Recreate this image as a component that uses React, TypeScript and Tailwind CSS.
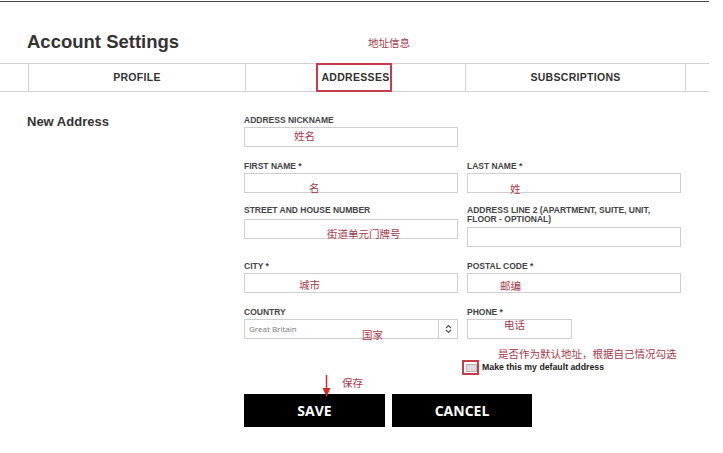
import React from 'react';

const note = "absolute text-[10.5px] leading-[12px] text-[#a53a48] whitespace-nowrap [font-family:'Noto_Sans_CJK_SC',sans-serif]";
const label = 'block text-[8.5px] leading-[9px] font-bold uppercase text-[#444]';
const input = 'block w-full h-[20px] border border-[#cfcfcf] bg-white';

function Field({ text, className = '', gap = 'mt-[2px]' }: { text: string; className?: string; gap?: string }) {
    return (
        <div className={className}>
            <span className={label}>{text}</span>
            <div className={`${input} ${gap}`} />
        </div>
    );
}

export default function App() {
    const tabs = [
        { name: 'PROFILE', w: 'w-[217px]' },
        { name: 'ADDRESSES', w: 'w-[220px]' },
        { name: 'SUBSCRIPTIONS', w: 'w-[220px]' },
    ];

    return (
        <div className="relative w-[723px] h-[453px] overflow-hidden bg-white text-[#333] [font-family:'Liberation_Sans',Arial,sans-serif]">
            {/* top rule */}
            <div className="mt-[1px] h-px w-[709px] bg-[#444]" />

            <h1 className="mt-[29px] pl-[27px] text-[18.5px] leading-[22px] font-bold text-[#333]">Account Settings</h1>

            {/* Tabs */}
            <div className="mt-[10px] flex h-[29px] w-[709px] border-y border-[#d2d2d2]">
                <div className="w-[28px]" />
                {tabs.map((t) => (
                    <div
                        key={t.name}
                        className={`${t.w} flex items-center justify-center border-l border-[#d2d2d2] text-[10.5px] font-bold tracking-[0.3px] text-[#333]`}
                    >
                        {t.name}
                    </div>
                ))}
                <div className="flex-1 border-l border-[#d2d2d2]" />
            </div>

            {/* Content */}
            <div className="mt-[22px] flex pl-[27px]">
                <div className="w-[217px] text-[13px] leading-[15px] font-bold text-[#333]">New Address</div>

                <div className="pt-[2px]">
                    <div className="grid grid-cols-[214px_214px] gap-x-[9px]">
                        <Field text="Address Nickname" />
                    </div>

                    <div className="mt-[15px] grid grid-cols-[214px_214px] gap-x-[9px]">
                        <Field text="First Name *" />
                        <Field text="Last Name *" />
                    </div>

                    <div className="mt-[13px] grid grid-cols-[214px_214px] gap-x-[9px] items-start">
                        <Field text="Street and House Number" gap="mt-[4px]" />
                        <div>
                            <span className="block text-[8.5px] leading-[8.5px] font-bold uppercase text-[#444]">
                                Address Line 2 (Apartment, Suite, Unit,
                                <br />
                                Floor - Optional)
                            </span>
                            <div className={`${input} mt-[4px]`} />
                        </div>
                    </div>

                    <div className="mt-[15px] grid grid-cols-[214px_214px] gap-x-[9px]">
                        <Field text="City *" />
                        <Field text="Postal Code *" />
                    </div>

                    <div className="mt-[15px] grid grid-cols-[214px_214px] gap-x-[9px]">
                        <div>
                            <span className={label}>Country</span>
                            <div className="mt-[2px] flex h-[20px] border border-[#cfcfcf] bg-white">
                                <div className="flex flex-1 items-center pl-[4px] text-[8px] text-[#777] [font-family:'Open_Sans',sans-serif]">
                                    Great Britain
                                </div>
                                <div className="flex w-[19px] items-center justify-center border-l border-[#cfcfcf]">
                                    <svg width="7" height="10" viewBox="0 0 7 10" fill="none" stroke="#555" strokeWidth="1.2">
                                        <path d="M1 4 L3.5 1.5 L6 4" />
                                        <path d="M1 6 L3.5 8.5 L6 6" />
                                    </svg>
                                </div>
                            </div>
                        </div>
                        <div>
                            <span className={label}>Phone *</span>
                            <div className="mt-[2px] h-[20px] w-[105px] border border-[#cfcfcf] bg-white" />
                        </div>
                    </div>

                    <div className="mt-[22px] grid grid-cols-[214px_214px] gap-x-[9px]">
                        <div />
                        <div className="flex h-[14px] items-center -ml-[1px]">
                            <span className="h-[8px] w-[11px] border border-[#b5b5b5] bg-[#dcdcdc]" />
                            <span className="ml-[5px] text-[8.75px] font-bold text-[#222]">Make this my default address</span>
                        </div>
                    </div>

                    <div className="mt-[19px] flex gap-[7px]">
                        <button className="h-[33px] w-[141px] bg-black text-[14px] font-bold text-white [font-family:'Open_Sans',sans-serif]">SAVE</button>
                        <button className="h-[33px] w-[140px] bg-black text-[14px] font-bold text-white [font-family:'Open_Sans',sans-serif]">CANCEL</button>
                    </div>
                </div>
            </div>

            {/* Annotations */}
            <div className="absolute left-[316px] top-[63px] h-[29px] w-[76px] border-2 border-[#c83c4b]" />
            <div className="absolute left-[462px] top-[360px] h-[15px] w-[17px] border-2 border-[#c83c4b]" />

            <span className={`${note} left-[368px] top-[37px]`}>地址信息</span>
            <span className={`${note} left-[294px] top-[130px]`}>姓名</span>
            <span className={`${note} left-[309px] top-[182px]`}>名</span>
            <span className={`${note} left-[510px] top-[183px]`}>姓</span>
            <span className={`${note} left-[327px] top-[228px]`}>街道单元门牌号</span>
            <span className={`${note} left-[299px] top-[279px]`}>城市</span>
            <span className={`${note} left-[500px] top-[280px]`}>邮编</span>
            <span className={`${note} left-[504px] top-[319px]`}>电话</span>
            <span className={`${note} left-[362px] top-[329px]`}>国家</span>
            <span className={`${note} left-[498px] top-[348px]`}>是否作为默认地址，根据自己情况勾选</span>
            <span className={`${note} left-[342px] top-[377px]`}>保存</span>

            <svg className="absolute left-[321px] top-[375px]" width="11" height="23" viewBox="0 0 11 23">
                <line x1="5.5" y1="0" x2="5.5" y2="15" stroke="#d42a2a" strokeWidth="1.5" />
                <path d="M1.5 13 L9.5 13 L5.5 22 Z" fill="#d42a2a" />
            </svg>
        </div>
    );
}
